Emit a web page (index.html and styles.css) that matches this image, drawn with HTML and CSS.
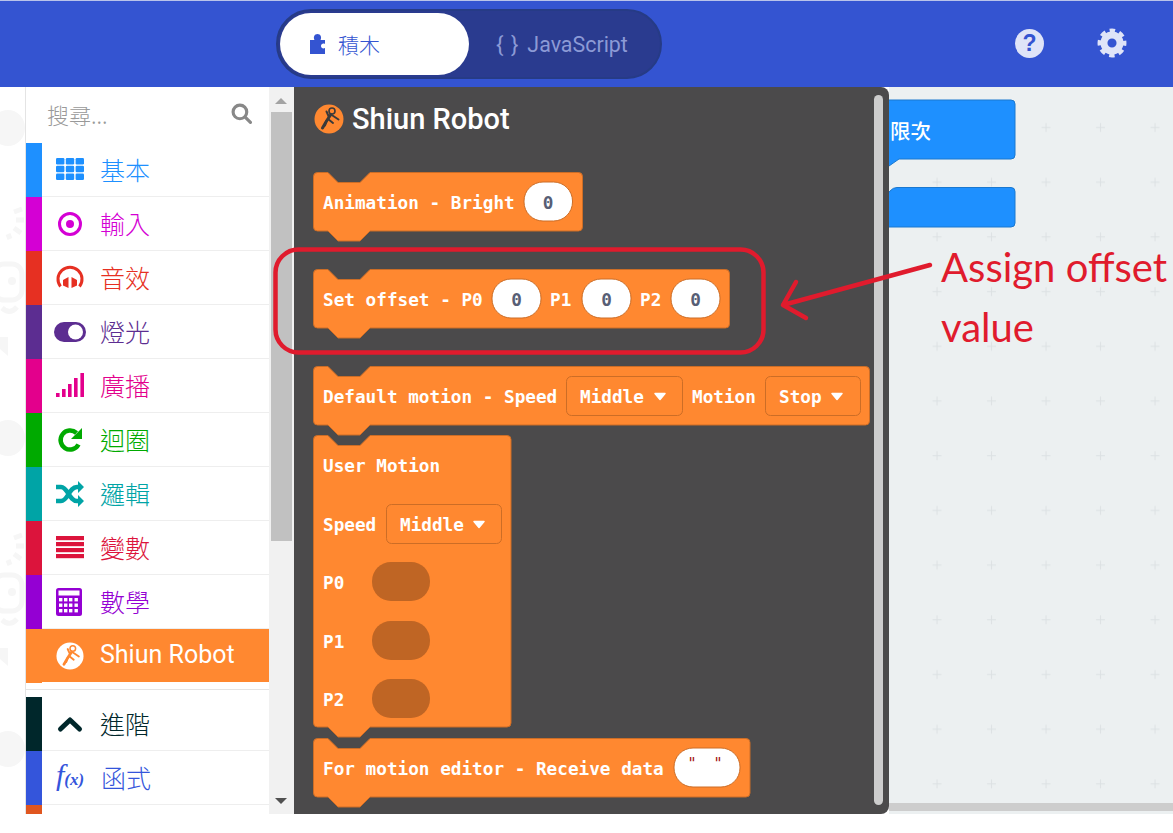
FILE: index.html
```html
<!DOCTYPE html>
<html lang="zh-Hant">
<head>
<meta charset="utf-8">
<title>Shiun Robot</title>
<link rel="stylesheet" href="styles.css">
</head>
<body>
<svg class="defs" width="0" height="0" aria-hidden="true">
  <symbol id="robot" viewBox="0 0 30 30">
    <circle class="rb-bg" cx="15" cy="15" r="14.5"/>
    <circle class="rb-head" cx="18" cy="7" r="3"/>
    <path class="rb-body" d="M16.500 11 L12.500 17 L8.500 24"/>
    <path class="rb-line" d="M12.500 17 L11 21.500 M17 10.500 L24.500 15.500 M14.500 12 L12.500 7.500 M14 15 L19 19"/>
  </symbol>
</svg>
<div class="app">
  <header class="topbar">
    <div class="switch">
      <div class="tab tab-on">
        <svg class="puzzle" viewBox="0 0 16 20"><path d="M0 6 H4.5 C3 3 4.5 0 7.5 0 C10.5 0 12 3 10.5 6 H15 V10 C13 9 11 10 11 12 C11 14 13 15 15 14 V20 H0 Z"/></svg>
        <span>積木</span>
      </div>
      <div class="tab tab-off"><span class="braces">{ }</span><span>JavaScript</span></div>
    </div>
    <div class="top-icons">
      <div class="help">?</div>
      <svg class="gear" viewBox="0 0 28 28">
        <circle class="gear-ring" cx="14" cy="14" r="7.5"/>
        <circle class="gear-teeth" cx="14" cy="14" r="11.5"/>
      </svg>
    </div>
  </header>
  <main class="main">
    <div class="sim">
      <svg class="sim-art" viewBox="0 0 25 727">
        <ellipse cx="8" cy="41" rx="17" ry="18"/>
        <path class="sim-line" d="M14 125 L22 122 M16 133 L24 133 M14 141 L21 146 M8 147 L10 152"/>
        <rect class="sim-line" x="-6" y="177" width="28" height="36" rx="10"/>
        <circle cx="12" cy="194" r="4"/>
        <path class="sim-line" d="M2 221 Q10 228 17 220"/>
        <path d="M0 250 H8 V269 L0 262 Z"/>
        <ellipse cx="8" cy="351" rx="17" ry="18"/>
        <path class="sim-line" d="M14 451 L22 448 M16 459 L24 459 M14 467 L21 472 M8 473 L10 478"/>
        <rect class="sim-line" x="-6" y="488" width="28" height="36" rx="10"/>
        <circle cx="12" cy="505" r="4"/>
        <path class="sim-line" d="M2 533 Q10 540 17 532"/>
        <path d="M0 561 H8 V579 L0 572 Z"/>
        <ellipse cx="8" cy="662" rx="17" ry="18"/>
      </svg>
    </div>
    <nav class="toolbox">
      <div class="search"><span>搜尋...</span>
        <svg class="mag" viewBox="0 0 20 20"><circle cx="8.5" cy="8.5" r="6.5"/><path d="M13.5 13.5 L18.5 18.5"/></svg>
      </div>
      <div class="row c-basic"><i class="strip"></i>
        <svg class="ico" viewBox="0 0 32 28"><g class="fill"><rect x="2" y="2" width="8.4" height="6.4" rx="1.2"/><rect x="11.8" y="2" width="8.4" height="6.4" rx="1.2"/><rect x="21.6" y="2" width="8.4" height="6.4" rx="1.2"/><rect x="2" y="9.8" width="8.4" height="6.4" rx="1.2"/><rect x="11.8" y="9.8" width="8.4" height="6.4" rx="1.2"/><rect x="21.6" y="9.8" width="8.4" height="6.4" rx="1.2"/><rect x="2" y="17.6" width="8.4" height="6.4" rx="1.2"/><rect x="11.8" y="17.6" width="8.4" height="6.4" rx="1.2"/><rect x="21.6" y="17.6" width="8.4" height="6.4" rx="1.2"/></g></svg>
        <span class="lbl">基本</span></div>
      <div class="row c-input"><i class="strip"></i>
        <svg class="ico" viewBox="0 0 32 28"><circle class="line l3" cx="16" cy="14" r="10.5"/><circle class="fill" cx="16" cy="14" r="4"/></svg>
        <span class="lbl">輸入</span></div>
      <div class="row c-music"><i class="strip"></i>
        <svg class="ico" viewBox="0 0 32 28"><path class="line l3" d="M6.500 22.500 A12 12 0 1 1 25.500 22.500"/><path class="fill" d="M14.500 13 V24 L9 21.500 V16 Z M17.500 13 V24 L23 21.500 V16 Z"/></svg>
        <span class="lbl">音效</span></div>
      <div class="row c-led"><i class="strip"></i>
        <svg class="ico" viewBox="0 0 32 28"><rect class="fill" x="0" y="4" width="32" height="20" rx="10"/><circle class="hole" cx="21.5" cy="14" r="7.5"/></svg>
        <span class="lbl">燈光</span></div>
      <div class="row c-radio"><i class="strip"></i>
        <svg class="ico" viewBox="0 0 32 28"><g class="fill"><rect x="2" y="21" width="3.6" height="4"/><rect x="8" y="17" width="3.6" height="8"/><rect x="14" y="12" width="3.6" height="13"/><rect x="20" y="6" width="3.6" height="19"/><rect x="26.4" y="1" width="3.6" height="24"/></g></svg>
        <span class="lbl">廣播</span></div>
      <div class="row c-loop"><i class="strip"></i>
        <svg class="ico" viewBox="0 0 32 28"><path class="line l4" d="M24.5 18.5 A9.5 9.5 0 1 1 22.5 7"/><path class="fill" d="M28 2 V13 H17 Z"/></svg>
        <span class="lbl">迴圈</span></div>
      <div class="row c-logic"><i class="strip"></i>
        <svg class="ico" viewBox="0 0 32 28"><path class="line l4" d="M2 7 H7 C14 7 15 21 23 21 H25 M2 21 H7 C14 21 15 7 23 7 H25"/><path class="fill" d="M24 1 L30 7 L24 13 Z M24 15 L30 21 L24 27 Z"/></svg>
        <span class="lbl">邏輯</span></div>
      <div class="row c-var"><i class="strip"></i>
        <svg class="ico" viewBox="0 0 32 28"><g class="fill"><rect x="2" y="2" width="28" height="4.2"/><rect x="2" y="8" width="28" height="4.2"/><rect x="2" y="14" width="28" height="4.2"/><rect x="2" y="20" width="28" height="4.2"/></g></svg>
        <span class="lbl">變數</span></div>
      <div class="row c-math"><i class="strip"></i>
        <svg class="ico" viewBox="0 0 32 28"><rect class="fill" x="2" y="0" width="26" height="28" rx="2.5"/><rect class="hole" x="4.5" y="2.5" width="21" height="5"/><g class="hole"><rect x="5" y="10" width="3.4" height="3.4"/><rect x="10" y="10" width="3.4" height="3.4"/><rect x="15" y="10" width="3.4" height="3.4"/><rect x="20.5" y="10" width="3.4" height="3.4"/><rect x="5" y="15.5" width="3.4" height="3.4"/><rect x="10" y="15.5" width="3.4" height="3.4"/><rect x="15" y="15.5" width="3.4" height="3.4"/><rect x="20.5" y="15.5" width="3.4" height="3.4"/><rect x="5" y="21" width="3.4" height="3.4"/><rect x="10" y="21" width="3.4" height="3.4"/><rect x="15" y="21" width="3.4" height="3.4"/><rect x="20.5" y="21" width="3.4" height="3.4"/></g></svg>
        <span class="lbl">數學</span></div>
      <div class="row row-active">
        <svg class="ico robot-w"><use href="#robot"/></svg>
        <span class="lbl lbl-en">Shiun Robot</span></div>
      <div class="sep"></div>
      <div class="row c-adv"><i class="strip"></i>
        <svg class="ico" viewBox="0 0 32 28"><path class="line l5" d="M6.5 19 L16 10 L25.5 19"/></svg>
        <span class="lbl">進階</span></div>
      <div class="row c-fn"><i class="strip"></i>
        <span class="fx"><em class="fx-f">f</em><em class="fx-x">(x)</em></span>
        <span class="lbl">函式</span></div>
      <div class="row c-more"><i class="strip"></i></div>
    </nav>
    <div class="vscroll">
      <i class="arr arr-up"></i>
      <div class="thumb"></div>
      <i class="arr arr-down"></i>
    </div>
    <section class="flyout">
      <h2 class="fly-title"><svg class="robot-o"><use href="#robot"/></svg><span>Shiun Robot</span></h2>
      <svg class="blk spaced" width="271" height="70">
        <path class="bshape" d="M.5 4.5a4 4 0 0 1 4-4H15L25 10.5H47L57 .5H265.500a4 4 0 0 1 4 4V55a4 4 0 0 1-4 4H57L47 69H25L15 59H4.500a4 4 0 0 1-4-4Z"/>
        <text class="bt" x="10" y="37">Animation - Bright</text>
        <rect class="field" x="211" y="10" width="48.500" height="39" rx="19"/>
        <text class="num" x="235" y="37">0</text>
      </svg>
      <svg class="blk spaced" width="418" height="70">
        <path class="bshape" d="M.5 4.5a4 4 0 0 1 4-4H15L25 10.5H47L57 .5H412.500a4 4 0 0 1 4 4V55a4 4 0 0 1-4 4H57L47 69H25L15 59H4.500a4 4 0 0 1-4-4Z"/>
        <text class="bt" x="10" y="37">Set offset - P0</text>
        <rect class="field" x="179" y="10" width="49" height="39" rx="19"/>
        <text class="num" x="203.500" y="37">0</text>
        <text class="bt" x="237" y="37">P1</text>
        <rect class="field" x="269" y="10" width="49" height="39" rx="19"/>
        <text class="num" x="293.500" y="37">0</text>
        <text class="bt" x="327" y="37">P2</text>
        <rect class="field" x="358" y="10" width="49" height="39" rx="19"/>
        <text class="num" x="382.500" y="37">0</text>
      </svg>
      <svg class="blk" width="558" height="69">
        <path class="bshape" d="M.5 4.5a4 4 0 0 1 4-4H15L25 10.5H47L57 .5H552.500a4 4 0 0 1 4 4V55a4 4 0 0 1-4 4H57L47 69H25L15 59H4.500a4 4 0 0 1-4-4Z"/>
        <text class="bt" x="10" y="37">Default motion - Speed</text>
        <rect class="drop" x="253.500" y="10.500" width="116" height="39" rx="5"/>
        <text class="bt" x="267" y="37">Middle</text>
        <path class="caret" d="M342 27.500h10l-5 6Z"/>
        <text class="bt" x="379" y="37">Motion</text>
        <rect class="drop" x="452.500" y="10.500" width="95" height="39" rx="5"/>
        <text class="bt" x="466" y="37">Stop</text>
        <path class="caret" d="M519 27.500h10l-5 6Z"/>
      </svg>
      <svg class="blk" width="200" height="303">
        <path class="bshape" d="M.5 4.5a4 4 0 0 1 4-4H15L25 10.5H47L57 .5H194a4 4 0 0 1 4 4V288a4 4 0 0 1-4 4H57L47 302H25L15 292H4.500a4 4 0 0 1-4-4Z"/>
        <text class="bt" x="10" y="37">User Motion</text>
        <text class="bt" x="10" y="96">Speed</text>
        <rect class="drop" x="73.500" y="69.500" width="115" height="39" rx="5"/>
        <text class="bt" x="87" y="96">Middle</text>
        <path class="caret" d="M161 86.500h10l-5 6Z"/>
        <text class="bt" x="10" y="154">P0</text>
        <rect class="slot" x="59" y="127" width="58" height="39" rx="19"/>
        <text class="bt" x="10" y="213">P1</text>
        <rect class="slot" x="59" y="186" width="58" height="39" rx="19"/>
        <text class="bt" x="10" y="271">P2</text>
        <rect class="slot" x="59" y="244" width="58" height="39" rx="19"/>
      </svg>
      <svg class="blk" width="439" height="70">
        <path class="bshape" d="M.5 4.5a4 4 0 0 1 4-4H15L25 10.5H47L57 .5H433a4 4 0 0 1 4 4V55a4 4 0 0 1-4 4H57L47 69H25L15 59H4.500a4 4 0 0 1-4-4Z"/>
        <text class="bt" x="10" y="37">For motion editor - Receive data</text>
        <rect class="field" x="361" y="10" width="66" height="39" rx="19"/>
        <text class="quote" x="379" y="31">"</text>
        <text class="quote" x="405" y="31">"</text>
      </svg>
      <div class="fly-scroll"></div>
    </section>
    <div class="workspace">
      <svg class="ws-art">
        <defs>
          <pattern id="grid" patternUnits="userSpaceOnUse" width="54.500" height="54.700">
            <path class="plus" d="M48 36 V45 M43.500 40.500 H52.500"/>
          </pattern>
        </defs>
        <rect class="ws-grid" width="100%" height="100%"/>
        <path class="ws-block" d="M-6 13H122a4 4 0 0 1 4 4V68a4 4 0 0 1-4 4H10L0 79H-6Z"/>
        <text class="ws-text" x="1" y="52">限次</text>
        <path class="ws-block" d="M-6 112L1 104Q4 100.500 8 100.500H122a4 4 0 0 1 4 4V136a4 4 0 0 1-4 4H-6Z"/>
        <rect class="ws-bar" y="716" width="100%" height="8"/>
      </svg>
    </div>
  </main>
</div>
<svg class="notes">
  <rect class="note-line" x="275.500" y="249.500" width="488" height="103" rx="23"/>
  <path class="note-line" d="M930 265 L783 305 M796 282 L783 305 L806 318"/>
  <text class="note-text" x="941" y="282">Assign offset</text>
  <text class="note-text" x="941" y="342">value</text>
</svg>
</body>
</html>
```
FILE: styles.css
```css
* { box-sizing: border-box; }
html, body { margin: 0; padding: 0; height: 100%; background: #fff; overflow: hidden; }
body { position: relative; font-family: Roboto, "Noto Sans CJK TC", sans-serif; }
.defs { position: absolute; }

.app { display: flex; flex-direction: column; height: 833px; padding-top: 1px; background: linear-gradient(#b9c3ea 1px, #fff 1px); }

.topbar { display: flex; align-items: center; height: 86px; padding: 0 46px 0 276px; background: #3454d1; flex: none; }
.switch { display: flex; width: 386px; height: 70px; padding: 2px; border: 2px solid #263b86; border-radius: 35px; background: #2a3b8f; }
.tab { display: flex; align-items: center; height: 62px; font-size: 21px; }
.tab-on { width: 189px; padding-left: 30px; background: #fff; border-radius: 31px; color: #3454d1; font-family: "Noto Sans CJK TC", sans-serif; font-weight: 300; }
.puzzle { width: 16px; height: 20px; fill: #3454d1; margin-right: 12px; }
.tab-off { padding-left: 27px; color: #8c9ad6; font-size: 21.400px; }
.braces { margin-right: 8px; font-size: 22px; letter-spacing: 1px; }
.top-icons { display: flex; align-items: center; gap: 53px; margin: -2px 0 0 auto; }
.help { width: 29px; height: 29px; border-radius: 50%; background: #dfe4f8; color: #3454d1; font: 700 23px/29px "Liberation Sans", sans-serif; text-align: center; }
.gear { width: 30px; height: 30px; }
.gear-ring { fill: none; stroke: #dfe4f8; stroke-width: 6.500; }
.gear-teeth { fill: none; stroke: #dfe4f8; stroke-width: 4; stroke-dasharray: 5 4.030; stroke-dashoffset: 2.500; }

.main { display: flex; height: 727px; flex: none; }
.sim { width: 26px; flex: none; border-right: 1px solid #e4e4e4; overflow: hidden; }
.sim-art { display: block; width: 25px; height: 727px; fill: #f6f6f6; }
.sim-line { fill: none; stroke: #f6f6f6; stroke-width: 5; }

.toolbox { width: 243px; flex: none; overflow: hidden; background: #fff; }
.search { display: flex; align-items: center; justify-content: space-between; height: 56px; padding: 0 17px 3px 21px; color: #999; font: 300 22px "Noto Sans CJK TC", sans-serif; }
.mag { width: 21px; height: 21px; fill: none; stroke: #888; stroke-width: 3; stroke-linecap: round; margin-top: -1px; }
.row { display: flex; align-items: center; height: 54px; border-bottom: 1px solid #eee; color: var(--c); }
.strip { align-self: stretch; width: 16px; margin-bottom: -1px; background: var(--c); flex: none; }
.ico { width: 32px; height: 28px; margin-left: 12px; flex: none; }
.fill { fill: var(--c); }
.hole { fill: #fff; }
.line { fill: none; stroke: var(--c); }
.l3 { stroke-width: 3; }
.l4 { stroke-width: 4.500; }
.l5 { stroke-width: 5; stroke-linecap: round; stroke-linejoin: round; }
.lbl { margin-left: 14px; padding-bottom: 2px; font: 300 25px "Noto Sans CJK TC", sans-serif; }
.lbl-en { font-family: Roboto, sans-serif; font-weight: 400; color: #fff; }
.c-basic { --c: #1e90ff; }
.c-input { --c: #d400d4; }
.c-music { --c: #e63022; }
.c-led { --c: #5c2d91; }
.c-radio { --c: #e3008c; }
.c-loop { --c: #00aa00; }
.c-logic { --c: #00a4a6; }
.c-var { --c: #dc143c; }
.c-math { --c: #9400d3; }
.c-adv { --c: #00272b; }
.c-fn { --c: #3455db; }
.c-more { --c: #e0561f; }
.row-active { height: 53px; padding-left: 16px; background: #ff8830; border-bottom: 0; }
.robot-w { width: 28px; height: 28px; margin-left: 14px; --rb: #fff; --rf: #ff8830; }
.robot-w + .lbl { margin-left: 16px; }
.rb-bg { fill: var(--rb); }
.rb-head { fill: none; stroke: var(--rf); stroke-width: 1.600; }
.rb-body { fill: none; stroke: var(--rf); stroke-width: 3; stroke-linecap: round; }
.rb-line { fill: none; stroke: var(--rf); stroke-width: 2; stroke-linecap: round; }
.sep { height: 15px; background: linear-gradient(#ff8830, #ff8830) left top / 16px 1px no-repeat, linear-gradient(#fff 7px, #e4e4e4 7px, #e4e4e4 8px, #fff 8px); }
.fx { width: 31px; margin-left: 14px; padding-bottom: 5px; color: var(--c); font-family: "Liberation Serif", serif; white-space: nowrap; }
.fx-f { font-size: 30px; }
.fx-x { font-size: 17px; font-weight: 700; }

.vscroll { display: flex; flex-direction: column; align-items: center; width: 25px; flex: none; padding: 0 3px 0 2px; background: #f1f1f1; position: relative; }
.arr { width: 0; height: 0; border-left: 6px solid transparent; border-right: 6px solid transparent; }
.arr-up { margin-top: 11px; border-bottom: 6px solid #a3a3a3; }
.arr-down { margin-top: auto; margin-bottom: 10px; border-top: 6px solid #505050; }
.thumb { width: 21px; height: 429px; margin-top: 8px; background: #c1c1c1; }

.flyout { position: relative; width: 595px; flex: none; padding-left: 19px; background: #4b4a4b; border-radius: 0 8px 8px 0; overflow: hidden; }
.fly-title { display: flex; align-items: center; height: 85px; margin: 0; padding: 0 0 21px 1px; color: #fff; font: 500 29px Roboto, sans-serif; }
.robot-o { width: 30px; height: 30px; margin-right: 8px; --rb: #ff8830; --rf: #3a3a3a; }
.blk { display: block; overflow: visible; }
.spaced { margin-bottom: 27px; }
.bshape { fill: #ff8830; stroke: #cc6d26; stroke-width: 1; }
.bt { fill: #fff; font: 700 17.700px "DejaVu Sans Mono", monospace; white-space: pre; }
.field { fill: #fff; stroke: #cc6d26; stroke-width: 1; }
.num { fill: #575e75; font: 700 17.700px "DejaVu Sans Mono", monospace; text-anchor: middle; }
.quote { fill: #a31515; font: 400 15px "DejaVu Sans Mono", monospace; text-anchor: middle; }
.drop { fill: none; stroke: #cc6d26; stroke-width: 1; }
.caret { fill: #fff; stroke: #fff; stroke-width: 1.500; stroke-linejoin: round; }
.slot { fill: #bf6524; }
.fly-scroll { position: absolute; top: 8px; bottom: 9px; right: 6px; width: 9px; border-radius: 5px; background: #cdcdcd; }

.workspace { flex: 1; min-width: 0; background: #ecf0f1; }
.ws-art { display: block; width: 100%; height: 100%; }
.ws-grid { fill: url(#grid); }
.plus { stroke: #dce1e3; stroke-width: 1; fill: none; }
.ws-block { fill: #1e90ff; stroke: #1a78cf; stroke-width: 1; }
.ws-text { fill: #fff; font: 500 20.500px "Noto Sans CJK TC", sans-serif; }
.ws-bar { fill: #cdcdcd; }

.notes { position: absolute; left: 0; top: 0; width: 1173px; height: 833px; pointer-events: none; }
.note-line { fill: none; stroke: #e01b2d; stroke-width: 4.500; stroke-linecap: round; stroke-linejoin: round; }
.note-text { fill: #e01b2d; font: 400 40px Lato, sans-serif; }
```
